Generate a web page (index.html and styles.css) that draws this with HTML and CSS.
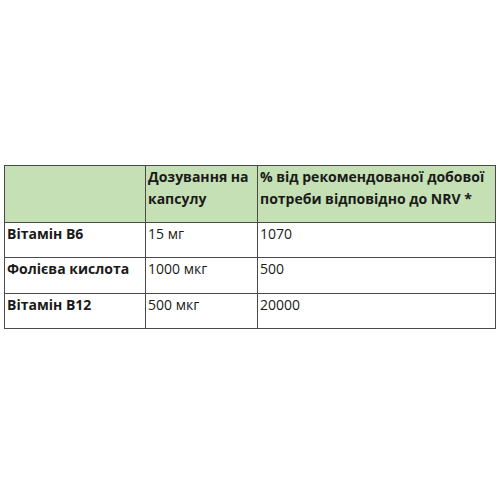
FILE: index.html
```
<!DOCTYPE html>
<html>
<head>
<meta charset="utf-8">
<link rel="stylesheet" href="styles.css">
</head>
<body>
<table class="nrv">
  <tr class="head">
    <td class="c1"></td>
    <td class="c2">Дозування на капсулу</td>
    <td class="c3">% від рекомендованої добової потреби відповідно до NRV *</td>
  </tr>
  <tr class="r1">
    <td class="name">Вітамін В6</td>
    <td>15 мг</td>
    <td>1070</td>
  </tr>
  <tr class="r2">
    <td class="name">Фолієва кислота</td>
    <td>1000 мкг</td>
    <td>500</td>
  </tr>
  <tr class="r3">
    <td class="name">Вітамін В12</td>
    <td>500 мкг</td>
    <td>20000</td>
  </tr>
</table>
</body>
</html>
```
FILE: styles.css
```
html, body {
  margin: 0;
  padding: 0;
  background: #ffffff;
}
body {
  padding: 165px 0 0 4px;
  font-family: "Open Sans", "Liberation Sans", sans-serif;
  color: #1a1a1a;
}
.nrv {
  border-collapse: collapse;
  width: 492px;
  table-layout: fixed;
}
.nrv td {
  border: 1.5px solid #4a4a4a;
  vertical-align: top;
  padding: 0 2px 0 2px;
  font-size: 14px;
  line-height: 22px;
}
.c1 { width: 136px; }
.c2 { width: 107px; }
.head td {
  background: #c5e0b4;
  font-weight: 700;
  height: 56px;
}
.r1 td { height: 34px; }
.r2 td { height: 35px; }
.r3 td { height: 34px; }
.name { font-weight: 700; }
```
